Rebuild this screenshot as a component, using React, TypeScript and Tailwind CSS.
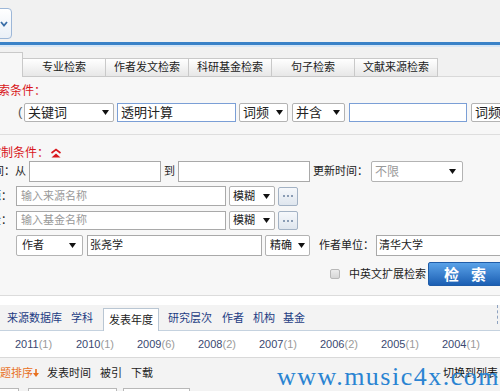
import React from "react";

const Tri = () => (
  <svg width="7" height="5" viewBox="0 0 7 5" className="shrink-0">
    <path d="M0 0H7L3.5 5Z" fill="#111" />
  </svg>
);

const Dots = () => (
  <div className="ml-[3px] w-[20px] h-[19px] shrink-0 self-center border border-[#a3b2c4] rounded-[2px] bg-gradient-to-b from-[#f6f8fb] to-[#dfe6ee] flex items-center justify-center gap-[2px]">
    <span className="w-[2px] h-[2px] bg-[#8a9cb4]" />
    <span className="w-[2px] h-[2px] bg-[#8a9cb4]" />
    <span className="w-[2px] h-[2px] bg-[#8a9cb4]" />
  </div>
);

export default function App() {
  return (
    <div className="relative w-[500px] h-[391px] overflow-hidden bg-white font-['Liberation_Sans','Noto_Sans_CJK_SC',sans-serif] text-[11px] text-[#222]">
      {/* top bar */}
      <div className="h-[42px] bg-[#f1f1f1] pt-[8px]">
        <div className="ml-[-20px] w-[32px] h-[31px] rounded-[4px] border border-[#9db7d8] bg-gradient-to-b from-white to-[#eaf0f7] flex items-center justify-end pr-[3px]">
          <svg width="8" height="6" viewBox="0 0 8 6">
            <path d="M1 1 L4 4.5 L7 1" stroke="#3b6fa8" strokeWidth="1.8" fill="none" />
          </svg>
        </div>
      </div>
      <div className="h-[3px] bg-[#3a82c8]" />
      <div className="h-[2px] bg-[#d6e6f6]" />

      {/* tabs */}
      <div className="h-[30px] bg-[#f1f1f1] flex items-end">
        <div className="ml-[-1px] w-[24px] h-[25px] shrink-0 bg-[#f7f7f7] border border-b-0 border-[#c9c9c9]" />
        {["专业检索", "作者发文检索", "科研基金检索", "句子检索", "文献来源检索"].map((t) => (
          <div
            key={t}
            className="w-[83px] h-[19px] shrink-0 border border-l-0 border-[#c9c9c9] bg-gradient-to-b from-white to-[#e7e7e7] flex items-center justify-center leading-none text-[#222]"
          >
            {t}
          </div>
        ))}
        <div className="flex-1 h-px bg-[#d9d9d9]" />
      </div>

      {/* search area */}
      <div className="bg-[#f7f7f7] pt-[8px] pb-[9px]">
        <div className="ml-[-14px] h-[12px] leading-[12px] text-[12px] text-[#d8161b] whitespace-nowrap">检索条件：</div>

        {/* row 1 */}
        <div className="mt-[6px] h-[19px] flex items-stretch text-[13px]">
          <span className="ml-[18px] w-[6px] shrink-0 leading-[18px] text-[#555]">(</span>
          <div className="w-[90px] shrink-0 bg-white border border-[#b3b3b3] rounded-[2px] flex items-center justify-between pl-[3px] pr-[4px]">
            <span className="leading-none">关键词</span>
            <Tri />
          </div>
          <div className="ml-[3px] w-[119px] shrink-0 bg-white border border-[#7b9fd6] flex items-center pl-[3px] leading-none">透明计算</div>
          <div className="ml-[3px] w-[49px] shrink-0 bg-white border border-[#b3b3b3] rounded-[2px] flex items-center justify-between pl-[3px] pr-[4px]">
            <span className="leading-none">词频</span>
            <Tri />
          </div>
          <div className="ml-[4px] w-[53px] shrink-0 bg-white border border-[#b3b3b3] rounded-[2px] flex items-center justify-between pl-[3px] pr-[4px]">
            <span className="leading-none">并含</span>
            <Tri />
          </div>
          <div className="ml-[4px] w-[118px] shrink-0 bg-white border border-[#7b9fd6]" />
          <div className="ml-[4px] w-[50px] shrink-0 bg-white border border-[#b3b3b3] rounded-[2px] flex items-center justify-between pl-[3px] pr-[4px]">
            <span className="leading-none">词频</span>
            <Tri />
          </div>
        </div>

        <div className="mt-[12px] h-px bg-[#dedede]" />

        <div className="mt-[11px] h-[14px] flex items-center ml-[-11px]">
          <span className="text-[12px] leading-none text-[#d8161b] whitespace-nowrap">控制条件：</span>
          <svg width="12" height="10" viewBox="0 0 12 10" className="ml-[1px]">
            <path d="M1.5 5 L6 1.5 L10.5 5" stroke="#d8161b" strokeWidth="1.6" fill="none" />
            <path d="M1.5 9.5 L6 5.5 L10.5 9.5 Z" fill="#d8161b" />
          </svg>
        </div>

        {/* time row */}
        <div className="mt-[1px] h-[21px] flex items-stretch">
          <div className="w-[15px] shrink-0 flex justify-end items-center overflow-hidden whitespace-nowrap leading-none">发表时间：</div>
          <span className="w-[14px] shrink-0 flex items-center leading-none">从</span>
          <div className="w-[132px] shrink-0 bg-white border border-[#a9a9a9]" />
          <span className="w-[17px] shrink-0 pl-[3px] flex items-center leading-none">到</span>
          <div className="w-[132px] shrink-0 bg-white border border-[#a9a9a9]" />
          <span className="w-[61px] shrink-0 pl-[3px] flex items-center leading-none whitespace-nowrap">更新时间：</span>
          <div className="w-[92px] shrink-0 bg-white border border-[#b3b3b3] rounded-[2px] flex items-center justify-between pl-[3px] pr-[6px] text-[12px] text-[#999]">
            <span className="leading-none">不限</span>
            <Tri />
          </div>
        </div>

        {/* source row */}
        <div className="mt-[4px] h-[20px] flex items-stretch">
          <div className="w-[12px] shrink-0 flex justify-end items-center overflow-hidden whitespace-nowrap leading-none">文献来源：</div>
          <div className="ml-[4px] w-[210px] shrink-0 bg-white border border-[#a9a9a9] flex items-center pl-[4px] text-[#999] leading-none">输入来源名称</div>
          <div className="ml-[3px] w-[46px] shrink-0 bg-white border border-[#b3b3b3] rounded-[2px] flex items-center justify-between pl-[3px] pr-[4px]">
            <span className="leading-none">模糊</span>
            <Tri />
          </div>
          <Dots />
        </div>

        {/* fund row */}
        <div className="mt-[5px] h-[19px] flex items-stretch">
          <div className="w-[12px] shrink-0 flex justify-end items-center overflow-hidden whitespace-nowrap leading-none">支持基金：</div>
          <div className="ml-[4px] w-[210px] shrink-0 bg-white border border-[#a9a9a9] flex items-center pl-[4px] text-[#999] leading-none">输入基金名称</div>
          <div className="ml-[3px] w-[46px] shrink-0 bg-white border border-[#b3b3b3] rounded-[2px] flex items-center justify-between pl-[3px] pr-[4px]">
            <span className="leading-none">模糊</span>
            <Tri />
          </div>
          <Dots />
        </div>

        {/* author row */}
        <div className="mt-[5px] h-[21px] flex items-stretch">
          <div className="ml-[16px] w-[67px] shrink-0 bg-white border border-[#b3b3b3] rounded-[2px] flex items-center justify-between pl-[5px] pr-[6px]">
            <span className="leading-none">作者</span>
            <Tri />
          </div>
          <div className="ml-[4px] w-[175px] shrink-0 bg-white border border-[#a9a9a9] flex items-center pl-[2px] leading-none">张尧学</div>
          <div className="ml-[3px] w-[45px] shrink-0 bg-white border border-[#b3b3b3] rounded-[2px] flex items-center justify-between pl-[4px] pr-[4px]">
            <span className="leading-none">精确</span>
            <Tri />
          </div>
          <span className="ml-[9px] w-[57px] shrink-0 flex items-center leading-none whitespace-nowrap">作者单位：</span>
          <div className="w-[140px] shrink-0 bg-white border border-[#a9a9a9] flex items-center pl-[2px] leading-none">清华大学</div>
        </div>

        {/* checkbox + button */}
        <div className="mt-[6px] h-[24px] flex items-center">
          <div className="ml-[330px] w-[10px] h-[10px] shrink-0 rounded-[2px] border border-[#b8b8b8] bg-gradient-to-b from-[#ececec] to-[#d6d6d6]" />
          <span className="ml-[9px] w-[79px] shrink-0 leading-none whitespace-nowrap">中英文扩展检索</span>
          <div className="w-[74px] h-[24px] shrink-0 rounded-[2px] border border-[#1f5ca8] bg-gradient-to-b from-[#5aa2e8] to-[#1b5fb3] flex items-center justify-center text-white font-bold text-[15px] tracking-[4px] pl-[4px] leading-none">
            检 索
          </div>
        </div>
      </div>
      <div className="h-px bg-[#dcdcdc]" />

      {/* result tabs */}
      <div className="bg-white pt-[9px]">
        <div className="h-[26px] bg-[#f3f3f3] border-b border-[#c5d2df] flex items-end text-[#1d3c83]">
          <span className="ml-[7px] h-[23px] flex items-center leading-none whitespace-nowrap">来源数据库</span>
          <span className="ml-[9px] h-[23px] flex items-center leading-none">学科</span>
          <div className="ml-[10px] w-[56px] h-[23px] mb-[-1px] bg-white border border-b-0 border-[#b9c6d3] flex items-center justify-center leading-none text-[#222]">发表年度</div>
          <span className="ml-[9px] h-[23px] flex items-center leading-none">研究层次</span>
          <span className="ml-[10px] h-[23px] flex items-center leading-none">作者</span>
          <span className="ml-[9px] h-[23px] flex items-center leading-none">机构</span>
          <span className="ml-[8px] h-[23px] flex items-center leading-none">基金</span>
          <div className="ml-auto w-[3px] h-[19px] self-start border-l border-dashed border-[#8fa3c0]" />
        </div>

        {/* years */}
        <div className="h-[27px] bg-white border-b border-[#d9d9d9] flex items-center pl-[15px]">
          {[
            ["2011", "1"],
            ["2010", "1"],
            ["2009", "6"],
            ["2008", "2"],
            ["2007", "1"],
            ["2006", "2"],
            ["2005", "1"],
            ["2004", "1"],
          ].map(([y, c]) => (
            <span key={y} className="w-[61px] shrink-0 leading-none whitespace-nowrap">
              <span className="text-[#3a4870]">{y}</span>
              <span className="text-[#9a9a9a]">({c})</span>
            </span>
          ))}
        </div>

        {/* sort row */}
        <div className="h-[30px] bg-[#f3f3f3] flex items-center">
          <span className="ml-[-11px] text-[#e8701e] leading-none whitespace-nowrap">主题排序</span>
          <svg width="6" height="8" viewBox="0 0 6 8" className="ml-[0px]">
            <path d="M3 0 V5" stroke="#e8701e" strokeWidth="1.6" />
            <path d="M0 4 H6 L3 8 Z" fill="#e8701e" />
          </svg>
          <span className="ml-[8px] leading-none">发表时间</span>
          <span className="ml-[9px] leading-none">被引</span>
          <span className="ml-[9px] leading-none">下载</span>
          <span className="ml-auto mr-[2px] leading-none text-[#111]">切换到列表</span>
        </div>

        <div className="h-[10px] bg-[#f3f3f3] flex items-start">
          <div className="ml-[-2px] w-[21px] h-[10px] bg-white border border-b-0 border-[#b8b8b8]" />
          <div className="ml-[9px] w-[89px] h-[10px] bg-white border border-b-0 border-[#b8b8b8]" />
          <div className="ml-[6px] w-[67px] h-[10px] bg-white border border-b-0 border-[#b8b8b8]" />
        </div>
      </div>

      {/* watermark */}
      <div className="absolute left-[277px] top-[364px] font-['Liberation_Serif',serif] text-[26px] leading-none tracking-[1.5px] text-[#2a84d2] whitespace-nowrap">
        www.music4x.com
      </div>
    </div>
  );
}
